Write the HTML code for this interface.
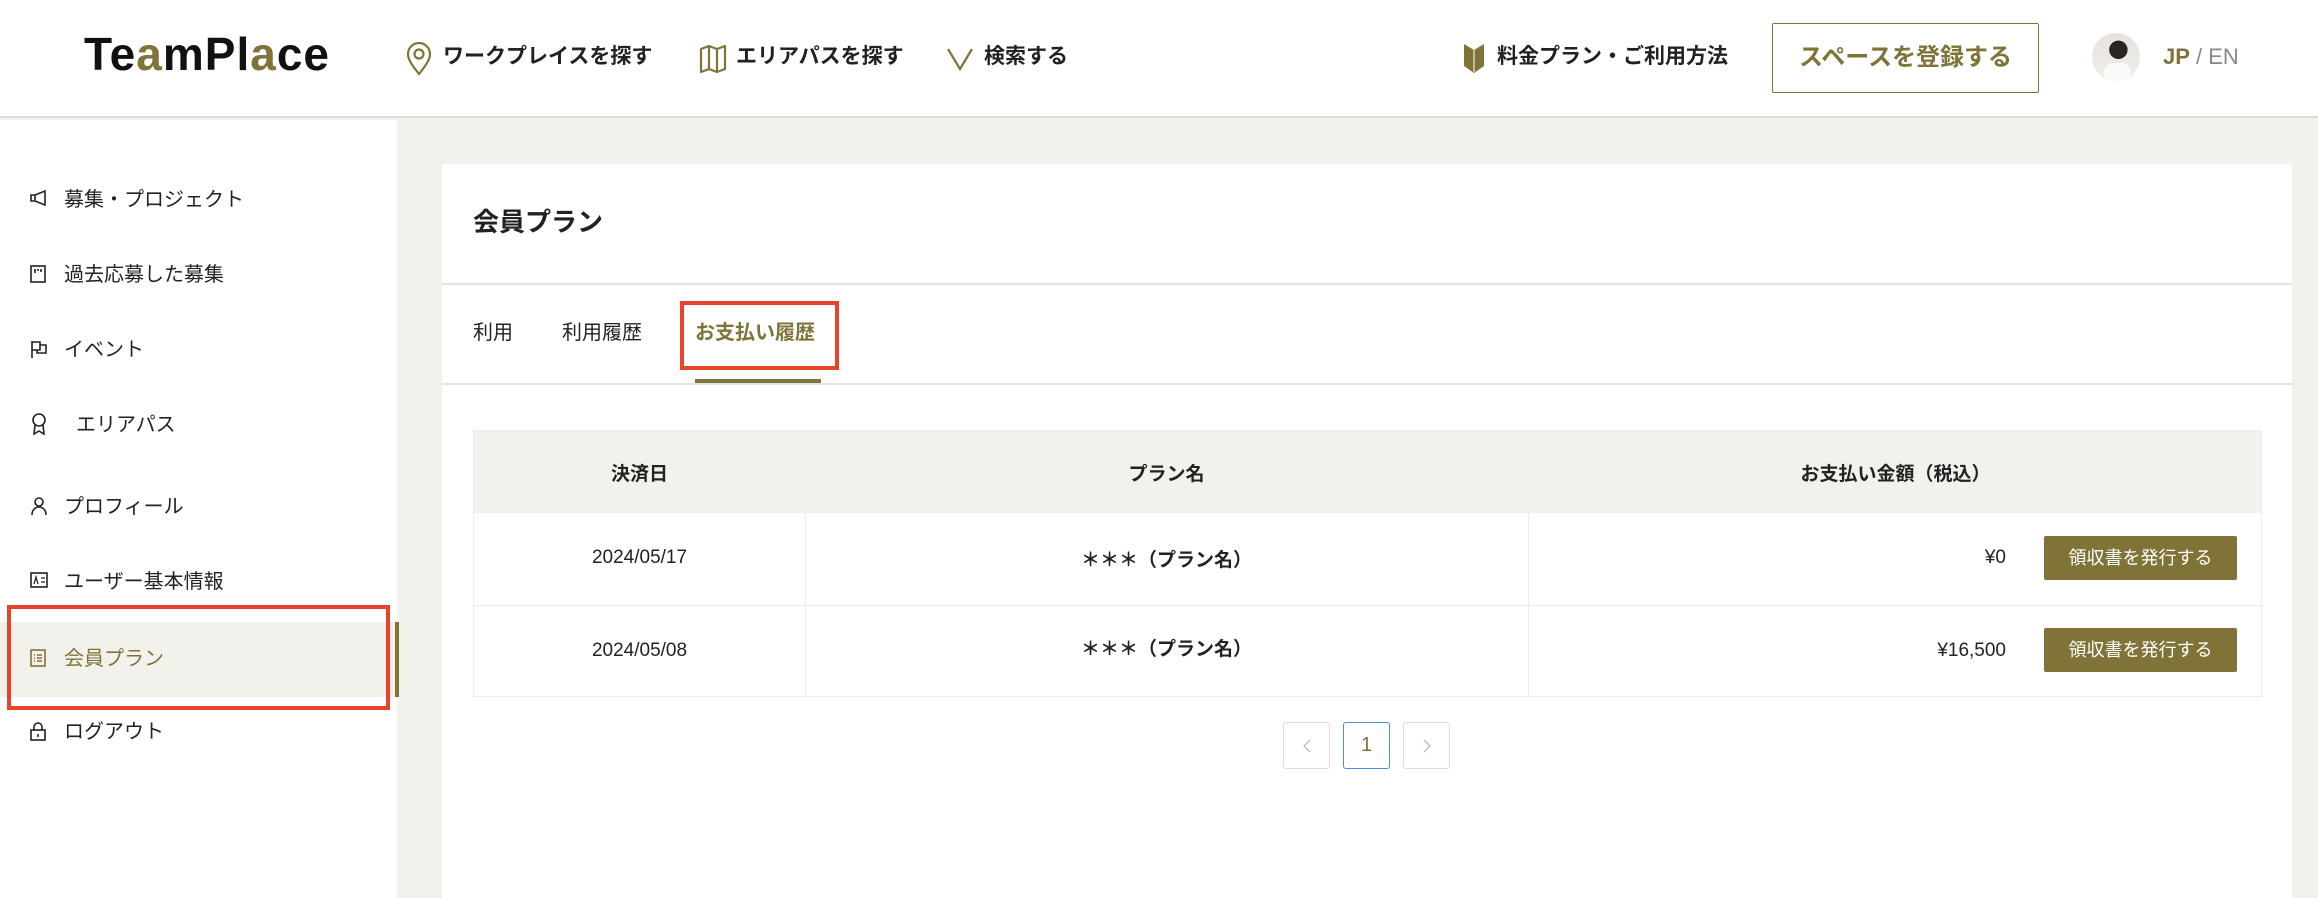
<!DOCTYPE html>
<html><head><meta charset="utf-8"><style>
*{margin:0;padding:0;box-sizing:border-box}
body{width:2318px;height:898px;overflow:hidden;background:#f2f1ec;font-family:"Liberation Sans","Noto Sans CJK JP",sans-serif;color:#222;position:relative}
.a{position:absolute}
.hdr{left:0;top:0;width:2318px;height:118px;background:#fff;border-bottom:2px solid #dcdcd8}
.nav{font-size:21px;font-weight:bold;color:#222;white-space:nowrap;line-height:24px}
.side{left:0;top:120px;width:397px;height:778px;background:#fff}
.si{left:0;width:397px;height:75px;font-size:20px;line-height:75px;padding-left:64px;color:#222}
.si svg{position:absolute;left:30px;top:27px}
.card{left:442px;top:164px;width:1850px;height:734px;background:#fff}
.ol{color:#7f7338}
.tbl{left:473px;top:430px;width:1789px;height:267px;border:1px solid #ececea}
.th{top:0;height:82px;width:100%;background:#f2f1ec}
.c{position:absolute;font-size:19px;text-align:center}
.btn{width:193px;height:44px;background:#7f7338;color:#fff;font-size:18px;line-height:44px;text-align:center;border-radius:2px}
.pg{top:722px;width:47px;height:47px;border:1px solid #ddd;border-radius:3px;text-align:center;line-height:45px;font-size:20px;color:#bbb;background:#fff}
.pg svg{position:absolute;left:18px;top:16px}
</style></head><body>
<div class="a hdr"></div>
<div class="a" style="left:84px;top:26px;font-size:46px;font-weight:bold;letter-spacing:1px;line-height:56px;color:#111">Te<span class="ol">a</span>mPl<span class="ol">a</span>ce</div>
<svg class="a" style="left:405px;top:42px" width="28" height="34" viewBox="0 0 28 34"><path d="M14 32C6 22 3 17 3 12a11 11 0 0 1 22 0c0 5-3 10-11 20z" fill="none" stroke="#7f7338" stroke-width="2.2"/><circle cx="14" cy="12" r="4.5" fill="none" stroke="#7f7338" stroke-width="2.2"/></svg>
<div class="a nav" style="left:443px;top:45px">ワークプレイスを探す</div>
<svg class="a" style="left:699px;top:44px" width="28" height="30" viewBox="0 0 28 30"><path d="M2 5l8-3 8 3 8-3v23l-8 3-8-3-8 3z M10 2v23 M18 5v23" fill="none" stroke="#7f7338" stroke-width="2.2" stroke-linejoin="round"/></svg>
<div class="a nav" style="left:736px;top:45px">エリアパスを探す</div>
<svg class="a" style="left:946px;top:47px" width="28" height="24" viewBox="0 0 28 24"><path d="M2 2l12 20L26 2" fill="none" stroke="#7f7338" stroke-width="2.2"/></svg>
<div class="a nav" style="left:984px;top:45px">検索する</div>
<svg class="a" style="left:1463px;top:42px" width="22" height="32" viewBox="0 0 22 32"><path d="M1 2l10 6 10-6v22l-10 7-10-7z" fill="#7f7338"/><path d="M11 8v22" stroke="#fff" stroke-width="1"/></svg>
<div class="a nav" style="left:1497px;top:45px">料金プラン・ご利用方法</div>
<div class="a" style="left:1772px;top:23px;width:267px;height:70px;border:1.5px solid #7f7338;border-radius:2px;color:#7f7338;font-size:24px;font-weight:bold;text-align:center;line-height:67px">スペースを登録する</div>
<div class="a" style="left:2092px;top:33px;width:48px;height:48px;border-radius:50%;background:radial-gradient(circle at 55% 35%,#2a2522 0 22%,transparent 23%),linear-gradient(#e6e2dc,#f1eee9);overflow:hidden"><div style="position:absolute;left:12px;top:30px;width:26px;height:20px;background:#fafafa;border-radius:8px 8px 0 0"></div></div>
<div class="a" style="left:2163px;top:42px;font-size:22px;line-height:30px;color:#888"><b class="ol">JP</b> / EN</div>

<div class="a side"></div>
<div class="a" style="left:0;top:622px;width:396px;height:75px;background:#f2f1ec"></div>
<div class="a" style="left:395px;top:622px;width:4px;height:75px;background:#7f7338"></div>
<div class="a si" style="top:163px"><svg width="18" height="16" viewBox="0 0 18 16"><path d="M1 5h4l10-4v14L5 11H1z M5 5v6" fill="none" stroke="#222" stroke-width="1.6"/></svg>募集・プロジェクト</div>
<div class="a si" style="top:238px"><svg width="16" height="18" viewBox="0 0 16 18"><rect x="1" y="1" width="14" height="16" fill="none" stroke="#222" stroke-width="1.6"/><path d="M5 4v4M8 4v2M11 4v3" stroke="#222" stroke-width="1.6"/></svg>過去応募した募集</div>
<div class="a si" style="top:313px"><svg width="18" height="18" viewBox="0 0 18 18"><path d="M2 1v17M2 2h8v8H2M10 5h6v8H7v-3" fill="none" stroke="#222" stroke-width="1.6"/></svg>イベント</div>
<div class="a si" style="top:388px;padding-left:76px"><svg width="18" height="22" viewBox="0 0 18 22" style="top:25px"><circle cx="9" cy="7" r="6" fill="none" stroke="#222" stroke-width="1.6"/><path d="M5 12l-1 9 5-3 5 3-1-9" fill="none" stroke="#222" stroke-width="1.6"/></svg>エリアパス</div>
<div class="a si" style="top:470px"><svg width="18" height="18" viewBox="0 0 18 18"><circle cx="9" cy="5" r="4" fill="none" stroke="#222" stroke-width="1.6"/><path d="M2 18c0-5 3-8 7-8s7 3 7 8" fill="none" stroke="#222" stroke-width="1.6"/></svg>プロフィール</div>
<div class="a si" style="top:545px"><svg width="18" height="16" viewBox="0 0 18 16"><rect x="1" y="1" width="16" height="14" fill="none" stroke="#222" stroke-width="1.6"/><path d="M4 12l2-7 2 7M11 6h4M11 10h4" fill="none" stroke="#222" stroke-width="1.3"/></svg>ユーザー基本情報</div>
<div class="a si ol" style="top:622px"><svg width="16" height="18" viewBox="0 0 16 18"><rect x="1" y="1" width="14" height="16" fill="none" stroke="#7f7338" stroke-width="1.6"/><path d="M4 6h1M4 9h1M4 12h1M7 6h5M7 9h5M7 12h5" stroke="#7f7338" stroke-width="1.4"/></svg>会員プラン</div>
<div class="a si" style="top:695px"><svg width="16" height="19" viewBox="0 0 16 19"><path d="M4 8V5a4 4 0 0 1 8 0v3" fill="none" stroke="#222" stroke-width="1.6"/><rect x="1" y="8" width="14" height="10" fill="none" stroke="#222" stroke-width="1.6"/><path d="M8 12v3" stroke="#222" stroke-width="1.6"/></svg>ログアウト</div>
<div class="a" style="left:7px;top:605px;width:383px;height:105px;border:4px solid #e8442a"></div>

<div class="a card"></div>
<div class="a" style="left:473px;top:205px;font-size:26px;font-weight:bold;line-height:34px">会員プラン</div>
<div class="a" style="left:442px;top:283px;width:1850px;height:2px;background:#e2e2e0"></div>
<div class="a" style="left:473px;top:320px;font-size:20px;line-height:26px">利用</div>
<div class="a" style="left:562px;top:320px;font-size:20px;line-height:26px">利用履歴</div>
<div class="a ol" style="left:695px;top:320px;font-size:20px;font-weight:bold;line-height:26px">お支払い履歴</div>
<div class="a" style="left:442px;top:383px;width:1850px;height:2px;background:#e2e2e0"></div>
<div class="a" style="left:695px;top:379px;width:126px;height:4px;background:#7f7338"></div>
<div class="a" style="left:680px;top:301px;width:159px;height:69px;border:4px solid #e8442a"></div>

<div class="a tbl">
 <div class="a th"></div>
 <div class="a" style="left:331px;top:82px;width:1px;height:184px;background:#ececea"></div>
 <div class="a" style="left:1054px;top:82px;width:1px;height:184px;background:#ececea"></div>
 <div class="a" style="left:0;top:174px;width:100%;height:1px;background:#ececea"></div>
 <div class="c" style="left:0;width:331px;top:28px;font-weight:bold">決済日</div>
 <div class="c" style="left:331px;width:723px;top:28px;font-weight:bold">プラン名</div>
 <div class="c" style="left:1054px;width:735px;top:28px;font-weight:bold">お支払い金額（税込）</div>
 <div class="c" style="left:0;width:331px;top:116px">2024/05/17</div>
 <div class="c" style="left:331px;width:723px;top:114px;font-weight:bold">＊＊＊（プラン名）</div>
 <div class="c" style="left:1054px;width:478px;top:116px;text-align:right">¥0</div>
 <div class="a btn" style="left:1570px;top:105px">領収書を発行する</div>
 <div class="c" style="left:0;width:331px;top:209px">2024/05/08</div>
 <div class="c" style="left:331px;width:723px;top:203px;font-weight:bold">＊＊＊（プラン名）</div>
 <div class="c" style="left:1054px;width:478px;top:209px;text-align:right">¥16,500</div>
 <div class="a btn" style="left:1570px;top:197px">領収書を発行する</div>
</div>
<div class="a pg" style="left:1283px"><svg width="10" height="14" viewBox="0 0 10 14"><path d="M8 1L2 7l6 6" fill="none" stroke="#bbb" stroke-width="1.3"/></svg></div>
<div class="a pg" style="left:1343px;border-color:#4a90e2;color:#7f7338">1</div>
<div class="a pg" style="left:1403px"><svg width="10" height="14" viewBox="0 0 10 14"><path d="M2 1l6 6-6 6" fill="none" stroke="#bbb" stroke-width="1.3"/></svg></div>
</body></html>
